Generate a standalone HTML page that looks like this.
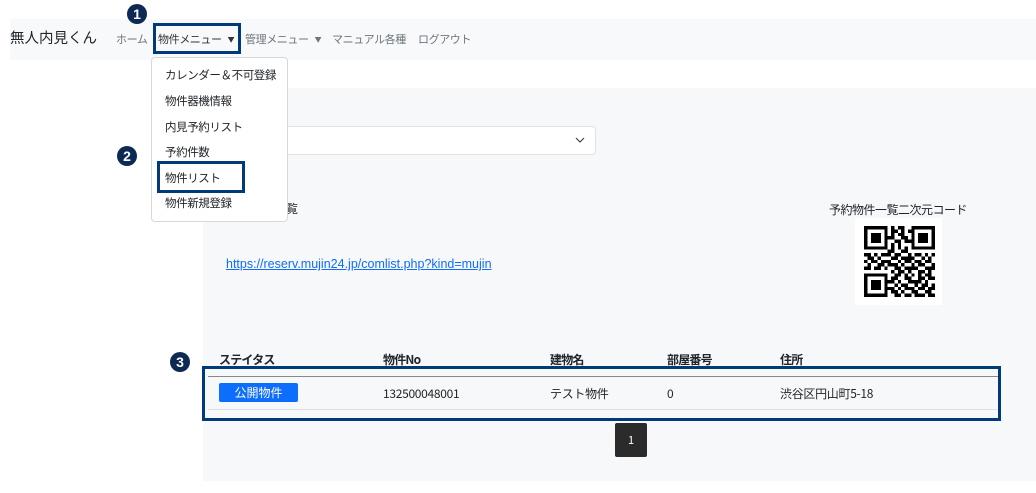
<!DOCTYPE html>
<html><head><meta charset="utf-8"><style>
*{box-sizing:border-box;margin:0;padding:0}
body{width:1036px;height:493px;background:#fff;font-family:"Noto Sans CJK JP","Liberation Sans",sans-serif;position:relative;overflow:hidden;color:#212529}
.abs{position:absolute;white-space:nowrap;line-height:16px}
.nav{position:absolute;left:10px;top:19px;width:1026px;height:41px;background:#f8f9fa}
.navi{font-size:11px;color:#6c757d;top:31px;letter-spacing:-0.4px}
.ar{font-size:7px;margin-left:6px;vertical-align:1px}
.panel{position:absolute;left:203px;top:88px;width:833px;height:393px;background:#f7f8fa}
.sel{position:absolute;left:203px;top:126px;width:393px;height:29px;background:#fff;border:1px solid #dee2e6;border-radius:4px}
.dd{position:absolute;left:151px;top:57px;width:137px;height:165px;background:#fff;border:1px solid #d5d8db;border-radius:4px}
.di{font-size:11.5px;color:#212529;left:165px;letter-spacing:-0.4px}
.hl{position:absolute;border:3px solid #003a7a}
.num{position:absolute;width:20px;height:20px;border-radius:50%;background:#0d2a55;color:#fff;font-weight:bold;font-size:14px;text-align:center;line-height:20px;font-family:"Liberation Sans",sans-serif}
.th{font-size:12px;font-weight:bold;top:352px;letter-spacing:-0.8px}
.td{font-size:12px;top:386px;letter-spacing:-0.3px}
</style></head><body>
<div class="nav"></div>
<div class="abs" style="left:10px;top:30px;font-size:14.5px;color:#212529">無人内見くん</div>
<div class="abs navi" style="left:116px">ホーム</div>
<div class="abs navi" style="left:158px;color:#333">物件メニュー<span class="ar">▼</span></div>
<div class="abs navi" style="left:245px">管理メニュー<span class="ar">▼</span></div>
<div class="abs navi" style="left:332px">マニュアル各種</div>
<div class="abs navi" style="left:418px">ログアウト</div>

<div class="panel"></div>
<div class="sel"></div>
<svg class="abs" style="left:575px;top:137px" width="10" height="7"><path d="M1 1L5 5L9 1" fill="none" stroke="#444" stroke-width="1.2"/></svg>
<div class="abs" style="left:286px;top:201px;font-size:12px">覧</div>
<div class="abs" style="left:829px;top:202px;font-size:12px;letter-spacing:-0.5px">予約物件一覧二次元コード</div>
<a class="abs" style="left:226px;top:256px;font-size:12.5px;color:#0d6efd;text-decoration:underline;font-family:'Liberation Sans',sans-serif">https://reserv.mujin24.jp/comlist.php?kind=mujin</a>
<div class="abs" style="left:855px;top:218px;width:87px;height:87px;background:#fff"></div>
<svg class="abs" id="qr" style="left:864px;top:226px" width="71" height="71" viewBox="0 0 21 21" shape-rendering="crispEdges"><path id="qp" fill="#000"/></svg>

<div class="abs th" style="left:219px">ステイタス</div>
<div class="abs th" style="left:383px">物件No</div>
<div class="abs th" style="left:550px">建物名</div>
<div class="abs th" style="left:667px">部屋番号</div>
<div class="abs th" style="left:780px">住所</div>
<div class="abs" style="left:208px;top:376px;width:790px;height:1px;background:#888"></div>
<div class="abs" style="left:208px;top:409px;width:790px;height:1px;background:#dee2e6"></div>
<div class="abs" style="left:219px;top:383px;width:79px;height:19px;background:#0d6efd;color:#fff;font-size:12px;text-align:center;line-height:19px;border-radius:2px">公開物件</div>
<div class="abs td" style="left:383px">132500048001</div>
<div class="abs td" style="left:550px">テスト物件</div>
<div class="abs td" style="left:667px">0</div>
<div class="abs td" style="left:780px">渋谷区円山町5-18</div>
<div class="abs" style="left:615px;top:423px;width:32px;height:34px;background:#2b2b2b;color:#fff;font-size:11px;text-align:center;line-height:34px;border-radius:2px">1</div>

<div class="dd"></div>
<div class="abs di" style="top:67px">カレンダー＆不可登録</div>
<div class="abs di" style="top:93px">物件器機情報</div>
<div class="abs di" style="top:119px">内見予約リスト</div>
<div class="abs di" style="top:144px">予約件数</div>
<div class="abs di" style="top:170px">物件リスト</div>
<div class="abs di" style="top:195px">物件新規登録</div>

<div class="hl" style="left:153px;top:23px;width:88px;height:31px"></div>
<div class="hl" style="left:157px;top:161px;width:88px;height:32px"></div>
<div class="hl" style="left:202px;top:366px;width:799px;height:55px"></div>
<div class="num" style="left:127px;top:4px">1</div>
<div class="num" style="left:117px;top:146px">2</div>
<div class="num" style="left:170px;top:352px">3</div>
<script>
var r=["111111101011001111111","100000101101011000001","101110101011001011101","101110111001101011101","101110100110111011101","100000101010001000001","111111101010101111111","000000011001100000000","110101110110010110101","011010001101111001010","101101110010110110110","010011011101001011001","110110100110111100111","000000001011010011010","111111100110101010110","100000101100110011011","101110111010011110100","101110100101100101101","101110111010111011011","100000101101001100110","111111100110110111011"];
var d="";for(var y=0;y<21;y++)for(var x=0;x<21;x++)if(r[y][x]=="1")d+="M"+x+" "+y+"h1v1h-1z";
document.getElementById("qp").setAttribute("d",d);
</script>
</body></html>
